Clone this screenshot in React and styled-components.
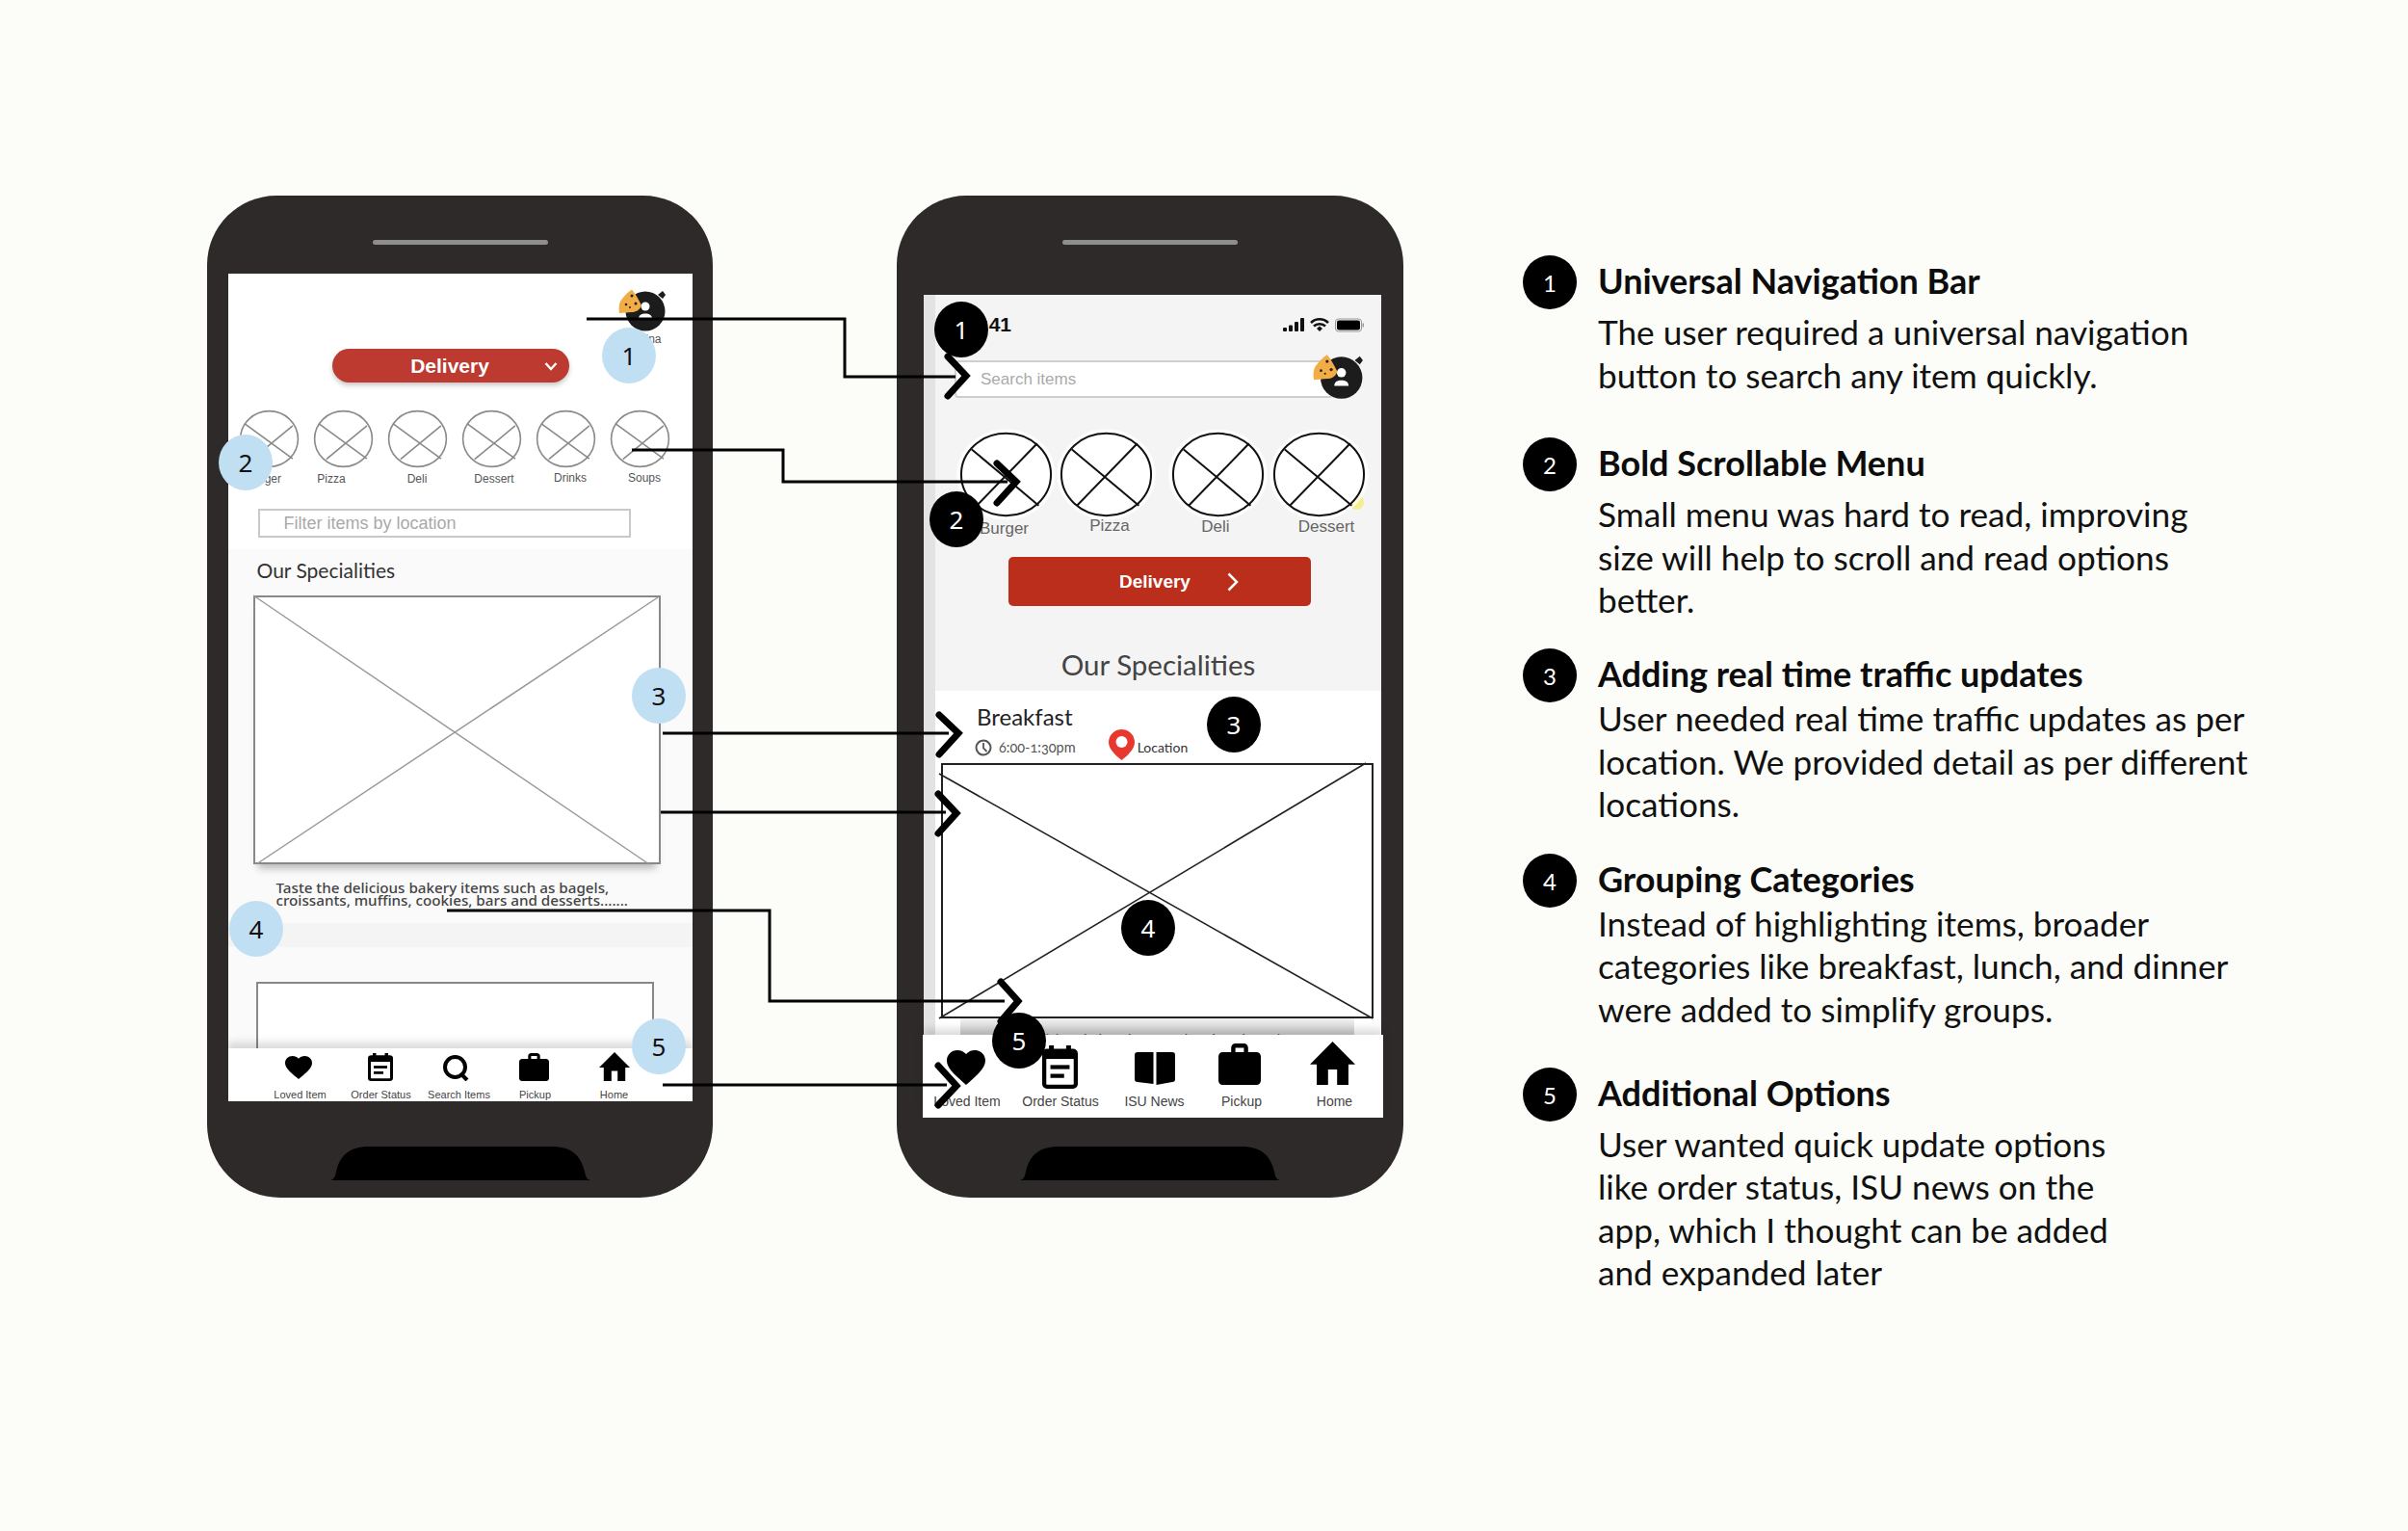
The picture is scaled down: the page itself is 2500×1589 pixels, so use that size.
import React from "react";
import styled, { createGlobalStyle } from "styled-components";

const GlobalStyle = createGlobalStyle`
  html, body {
    margin: 0;
    padding: 0;
    background: #fcfdf8;
    font-family: "Liberation Sans", Arial, sans-serif;
  }
`;

const Page = styled.div`
  position: relative;
  width: 2500px;
  height: 1589px;
  overflow: hidden;
  display: flex;
  align-items: flex-start;
  padding: 203px 0 0 215px;
  box-sizing: border-box;
`;

/* phone shell */
const Phone = styled.div`
  width: ${(p) => p.$w || 525}px;
  height: 1040px;
  margin-left: ${(p) => p.$gap || 0}px;
  flex: none;
  background: #2e2a29;
  border-radius: 72px 72px 76px 76px;
  display: flex;
  flex-direction: column;
  align-items: center;
`;

const Speaker = styled.div`
  width: 182px;
  height: 5px;
  margin-top: 46px;
  border-radius: 3px;
  background: #8e8e8e;
  flex: none;
`;

const Screen = styled.div`
  width: ${(p) => p.$w}px;
  height: ${(p) => p.$h}px;
  margin-top: ${(p) => p.$top}px;
  margin-left: ${(p) => p.$left || 0}px;
  flex: none;
  background: ${(p) => p.$bg};
  display: flex;
  flex-direction: column;
  overflow: ${(p) => (p.$clip ? "hidden" : "visible")};
`;

const NotchArt = styled.svg`
  display: block;
  width: 270px;
  height: 35px;
  margin-top: ${(p) => p.$top}px;
  flex: none;
`;

const Notch = ({ top }) => (
  <NotchArt $top={top} viewBox="0 0 270 35">
    <path d="M0 35C4 34 5 31 6 26C10 9 20 0 40 0H230C250 0 260 9 264 26C265 31 266 34 270 35Z" fill="#000" />
  </NotchArt>
);

/* shared bits inside the screens */
const Placeholder = styled.svg`
  display: block;
  width: ${(p) => p.$w}px;
  height: ${(p) => p.$h}px;
  overflow: visible;
  flex: none;
`;

const CrossCircle = ({ w, h, stroke, width, halo, speck, lines }) => (
  <Placeholder $w={w} $h={h} viewBox="0 0 100 100" preserveAspectRatio="none">
    {speck && <ellipse cx="91" cy="83" rx="8" ry="9" fill="#f5ee8e" />}
    {halo && <ellipse cx="50" cy="50" rx="54" ry="54" fill="#fff" opacity="0.8" />}
    <ellipse cx="50" cy="50" rx="49" ry="49" fill="#fff" stroke={stroke} strokeWidth={width} vectorEffect="non-scaling-stroke" />
    <path d={lines} fill="none" stroke={stroke} strokeWidth={width} vectorEffect="non-scaling-stroke" />
  </Placeholder>
);

const CircleItem = styled.div`
  width: ${(p) => p.$w}px;
  margin-left: ${(p) => p.$left || 0}px;
  display: flex;
  flex-direction: column;
  align-items: center;
  flex: none;
`;

const CircleLabel = styled.span`
  font-size: ${(p) => p.$size}px;
  line-height: ${(p) => p.$line}px;
  margin-top: ${(p) => p.$top}px;
  color: ${(p) => p.$color};
  white-space: nowrap;
  transform: translate(${(p) => p.$dx || 0}px, ${(p) => p.$dy || 0}px);
`;

const ChevronArt = styled.svg`
  display: block;
  flex: none;
  width: ${(p) => p.$w}px;
  height: ${(p) => p.$h}px;
`;

const AvatarArt = styled.svg`
  display: block;
  width: ${(p) => p.$w}px;
  height: ${(p) => p.$h}px;
  flex: none;
`;

const Avatar = ({ w, h }) => (
  <AvatarArt $w={w} $h={h} viewBox="0 0 50 44">
    <circle cx="28" cy="23" r="20.5" fill="#1c1c1c" />
    <path d="M41 6L46 2L49 6L46 10Z" fill="#1c1c1c" />
    <circle cx="28" cy="18" r="4.5" fill="#fff" />
    <path d="M21 31c0-4 3-5.500 7-5.500s7 1.500 7 5.500z" fill="#fff" />
    <path d="M1 25C0 18 1 13 4 10C7 6 10 3 14 0.500C18 5 21 11 24 17C22 22 18 24 14 24Z" fill="#f2ad47" />
    <circle cx="14" cy="7" r="1.500" fill="#222" />
    <circle cx="8" cy="16" r="1.300" fill="#222" />
    <circle cx="18" cy="15" r="1.500" fill="#222" />
    <circle cx="12" cy="19" r="1" fill="#222" />
  </AvatarArt>
);

const NavBar = styled.nav`
  flex: none;
  position: relative;
  z-index: 1;
  display: flex;
  background: #fff;
  height: ${(p) => p.$h}px;
  margin: ${(p) => p.$margin};
  padding-left: ${(p) => p.$pad || 0}px;
  box-shadow: 0 -6px 8px rgba(0, 0, 0, 0.14);
`;

const NavItem = styled.div`
  width: ${(p) => p.$w}px;
  flex: none;
  display: flex;
  flex-direction: column;
  align-items: center;
`;

const NavIconSlot = styled.div`
  height: ${(p) => p.$h}px;
  display: flex;
  align-items: flex-end;
  justify-content: center;
`;

const NavLabel = styled.span`
  font-size: ${(p) => p.$size}px;
  line-height: ${(p) => p.$line}px;
  margin-top: ${(p) => p.$top}px;
  color: #444;
  white-space: nowrap;
  transform: translateX(${(p) => p.$dx || 0}px);
`;

const Glyph = styled.svg`
  display: block;
  width: ${(p) => p.$w}px;
  height: ${(p) => p.$h}px;
  fill: #000;
  transform: translateY(${(p) => p.$drop || 0}px);
`;

const IconHeart = (p) => (
  <Glyph {...p} viewBox="2 3 20 18.35" preserveAspectRatio="none">
    <path d="M12 21.35l-1.45-1.32C5.4 15.36 2 12.28 2 8.5 2 5.42 4.42 3 7.5 3c1.74 0 3.41.81 4.5 2.09C13.09 3.81 14.76 3 16.5 3 19.58 3 22 5.42 22 8.5c0 3.78-3.4 6.86-8.55 11.54L12 21.35z" />
  </Glyph>
);

const IconCalendar = (p) => (
  <Glyph {...p} viewBox="0 0 26 32" preserveAspectRatio="none">
    <rect x="1.500" y="4" width="23" height="26.500" rx="2" fill="#fff" stroke="#000" strokeWidth="3" />
    <rect x="1.500" y="4" width="23" height="6" fill="#000" />
    <rect x="5" y="0" width="3.500" height="6" />
    <rect x="17.500" y="0" width="3.500" height="6" />
    <rect x="6" y="14.500" width="14" height="3" />
    <rect x="6" y="21" width="10" height="3" />
  </Glyph>
);

const IconSearch = (p) => (
  <Glyph {...p} viewBox="0 0 27 27" preserveAspectRatio="none">
    <circle cx="12.500" cy="12.500" r="10.500" fill="none" stroke="#000" strokeWidth="4" />
    <path d="M18 19L25 26" stroke="#000" strokeWidth="4" fill="none" />
  </Glyph>
);

const IconBook = (p) => (
  <Glyph {...p} viewBox="0 0 42 34" preserveAspectRatio="none">
    <path d="M3 0H19.500V33L3 31C1 31 0 30 0 28V3C0 1 1 0 3 0Z" />
    <path d="M39 0H22.500V34L39 31C41 31 42 30 42 28V3C42 1 41 0 39 0Z" />
  </Glyph>
);

const IconCase = (p) => (
  <Glyph {...p} viewBox="2 2 20 19" preserveAspectRatio="none">
    <path d="M20 6h-4V4c0-1.110-.89-2-2-2h-4c-1.110 0-2 .89-2 2v2H4c-1.110 0-1.990.89-1.990 2L2 19c0 1.110.89 2 2 2h16c1.110 0 2-.89 2-2V8c0-1.110-.89-2-2-2zm-6 0h-4V4h4v2z" />
  </Glyph>
);

const IconHome = (p) => (
  <Glyph {...p} viewBox="2 3 20 17" preserveAspectRatio="none">
    <path d="M10 20v-6h4v6h5v-8h3L12 3 2 12h3v8z" />
  </Glyph>
);

/* left phone */
const TopRight = styled.div`
  display: flex;
  flex-direction: column;
  align-items: flex-end;
  padding: 16px 27px 0 0;
`;

const UserName = styled.span`
  font-size: 12px;
  line-height: 15px;
  color: #555;
  margin-right: 5px;
  margin-top: 1px;
`;

const DeliveryPill = styled.div`
  width: 246px;
  height: 35px;
  margin: 2px 0 0 108px;
  box-sizing: border-box;
  padding-right: 12px;
  border-radius: 18px;
  background: #bc3a30;
  box-shadow: 0 3px 5px rgba(0, 0, 0, 0.22);
  color: #fff;
  font-weight: 700;
  font-size: 21px;
  display: grid;
  grid-template-columns: 1fr auto 1fr;
  align-items: center;
  span { grid-column: 2; margin-left: 11px; }
  svg { grid-column: 3; justify-self: end; }
`;

const SmallCircles = styled.div`
  display: flex;
  gap: 16px;
  margin: 29px 0 0 12px;
`;

const FilterBox = styled.div`
  width: 387px;
  height: 30px;
  margin: 24px 0 0 31px;
  box-sizing: border-box;
  border: 2px solid #c9c9c9;
  padding-left: 25px;
  color: #a9a9a9;
  font-size: 18px;
  line-height: 26px;
`;

const SpecialSection = styled.section`
  flex: 1;
  min-height: 0;
  margin-top: 12px;
  background: #fafafa;
  overflow: hidden;
  display: flex;
  flex-direction: column;
`;

const SmallTitle = styled.h3`
  margin: 10px 0 0 30px;
  font: 400 21px/24px "Lato", sans-serif;
  color: #333;
`;

const FoodFrame = styled.div`
  width: 423px;
  height: 279px;
  margin: 14px 0 0 26px;
  flex: none;
  box-shadow: 0 9px 8px -5px rgba(0, 0, 0, 0.28);
  svg { background: #fff; }
`;

const FoodText = styled.p`
  margin: 18px 0 0 50px;
  font: 500 15.2px/13px "Noto Sans", sans-serif;
  color: #444;
  white-space: nowrap;
`;

const Band = styled.div`
  height: 25px;
  margin-top: 17px;
  background: #f4f4f4;
  flex: none;
`;

const NextFrame = styled.div`
  width: 413px;
  height: 120px;
  margin: 36px 0 0 29px;
  box-sizing: border-box;
  border: 2px solid #888;
  background: #fff;
  flex: none;
`;

/* right phone */
const RightBody = styled.div`
  flex: 1;
  min-height: 0;
  border-left: 12px solid #e3e3e3;
  overflow: hidden;
  display: flex;
  flex-direction: column;
`;

const StatusBar = styled.div`
  display: flex;
  justify-content: space-between;
  align-items: center;
  height: 22px;
  padding: 20px 18px 0 37px;
  font-size: 21px;
  font-weight: 700;
  color: #111;
`;

const SearchWrap = styled.div`
  position: relative;
  width: 393px;
  height: 39px;
  margin: 26px 0 0 20px;
  flex: none;
`;

const SearchField = styled.div`
  height: 100%;
  box-sizing: border-box;
  background: #fff;
  border: 2px solid #cfcfcf;
  border-radius: 4px;
  padding-left: 25px;
  font-size: 17px;
  line-height: 35px;
  color: #aaa;
`;

const AvatarSpot = styled.div`
  position: absolute;
  left: 372px;
  top: -7px;
`;

const BigCircles = styled.div`
  display: flex;
  margin: 36px 0 0 25.5px;
`;

const DeliveryButton = styled.div`
  width: 314px;
  height: 51px;
  margin: 21px 0 0 76px;
  flex: none;
  box-sizing: border-box;
  padding-left: 115px;
  border-radius: 5px;
  background: #bb2e1b;
  color: #fff;
  font-weight: 700;
  font-size: 19px;
  display: flex;
  align-items: center;
  gap: 38px;
`;

const BigTitle = styled.h3`
  margin: 43px 0 0;
  text-align: center;
  font: 400 29.5px/36px "Lato", sans-serif;
  color: #444;
  flex: none;
`;

const WhiteSection = styled.section`
  flex: 1;
  margin-top: 9px;
  background: #fff;
  display: flex;
  flex-direction: column;
  min-height: 0;
  overflow: hidden;
`;

const MealName = styled.div`
  margin: 13px 0 0 43px;
  font: 400 24px/28px "Lato", sans-serif;
  color: #222;
`;

const MealMeta = styled.div`
  display: flex;
  align-items: flex-end;
  height: 32px;
  margin: -1px 0 0 41px;
  font: 400 14.5px/26px "Lato", sans-serif;
  font-variant-numeric: oldstyle-nums;
  color: #555;
  flex: none;
  svg { flex: none; }
`;

const MetaText = styled.span`
  margin-left: ${(p) => p.$left}px;
  font-size: ${(p) => p.$size || 14.5}px;
  white-space: nowrap;
  ${(p) => (p.$dark ? "color: #333;" : "")}
`;

const ClockArt = styled.svg`
  width: 18px;
  height: 18px;
  margin-bottom: 4px;
`;

const PinArt = styled.svg`
  width: 27px;
  height: 32px;
  margin-left: 34px;
`;

const BigFrame = styled.div`
  margin: 3px 0 0 6px;
  flex: none;
  svg { background: #fff; }
`;

const ClippedCaption = styled.div`
  width: 409px;
  height: 17px;
  margin-left: 26px;
  box-sizing: border-box;
  padding-left: 10px;
  overflow: hidden;
  white-space: nowrap;
  background: linear-gradient(#f0f0f0, #cfcfcf);
  font: 500 13px/42px "Noto Sans", sans-serif;
  color: #444;
  flex: none;
`;

/* legend */
const Legend = styled.div`
  margin: 62px 0 0 124px;
  width: 800px;
  flex: none;
`;

const LegendItem = styled.div`
  display: grid;
  grid-template-columns: 56px 1fr;
  column-gap: 22px;
  margin-top: ${(p) => p.$top || 0}px;
`;

const LegendDot = styled.div`
  width: 56px;
  height: 56px;
  border-radius: 50%;
  background: #000;
  color: #fff;
  font: 400 24px/58px "Lato", sans-serif;
  text-align: center;
`;

const LegendCopy = styled.div`
  padding-top: 4px;
`;

const LegendHead = styled.h2`
  margin: 0;
  font: 700 36px/44px "Lato", sans-serif;
  color: #0c0c0c;
  white-space: nowrap;
`;

const LegendBody = styled.p`
  margin: ${(p) => (p.$tight ? 2 : 9)}px 0 0;
  font: 400 35.2px/44.6px "Lato", sans-serif;
  color: #111;
  white-space: pre-line;
`;

/* annotations over everything */
const Overlay = styled.svg`
  position: absolute;
  left: 0;
  top: 0;
  z-index: 2;
  width: 2500px;
  height: 1589px;
  pointer-events: none;
`;

const Badge = styled.div`
  position: absolute;
  z-index: 3;
  left: ${(p) => p.$x - 28}px;
  top: ${(p) => p.$y - 29}px;
  width: 56px;
  height: 58px;
  border-radius: 50%;
  background: ${(p) => (p.$dark ? "#000" : "#c1dff3")};
  color: ${(p) => (p.$dark ? "#fff" : "#111")};
  font: 400 26px/58px "Noto Sans", sans-serif;
  text-align: center;
`;

const leftLines = "M8 23L90 85M21 86L90 27";
const rightLines = "M12.500 20L85.700 87M18 87L84 13";

const leftCircles = [
  { name: "Burger", dx: -5 },
  { name: "Pizza", dx: -12 },
  { name: "Deli", dx: 0 },
  { name: "Dessert", dx: 3 },
  { name: "Drinks", dx: 5, dy: -1 },
  { name: "Soups", dx: 5, dy: -1 },
];

const rightCircles = [
  { name: "Burger", dx: -1.5, dy: 2 },
  { name: "Pizza", left: 9.5, dx: 3.5, dy: -1 },
  { name: "Deli", left: 20.5, dx: -2 },
  { name: "Dessert", left: 10, dx: 8, speck: true },
];

const legend = [
  { n: 1, head: "Universal Navigation Bar", body: "The user required a universal navigation\nbutton to search any item quickly." },
  { n: 2, top: 43, head: "Bold Scrollable Menu", body: "Small menu was hard to read, improving\nsize will help to scroll and read options\nbetter." },
  { n: 3, top: 28, tight: true, head: "Adding real time traffic updates", body: "User needed real time traffic updates as per\nlocation. We provided detail as per different\nlocations." },
  { n: 4, top: 29, tight: true, head: "Grouping Categories", body: "Instead of highlighting items, broader\ncategories like breakfast, lunch, and dinner\nwere added to simplify groups." },
  { n: 5, top: 38, head: "Additional Options", body: "User wanted quick update options\nlike order status, ISU news on the\napp, which I thought can be added\nand expanded later" },
];

const connectors = [
  { line: "M609 331H877V391H992", head: "M984 370L1003 390L984 411" },
  { line: "M656 467H813V500H1046", head: "M1035 481L1055 500L1035 522" },
  { line: "M688 761H985", head: "M975 742L995 761L975 783" },
  { line: "M686 843H982", head: "M974 824L993 844L974 865" },
  { line: "M464 945H799V1039H1043", head: "M1039 1019L1057 1039L1039 1060" },
  { line: "M688 1126H983", head: "M974 1106L993 1127L974 1147" },
];

const blueBadges = [
  [1, 653, 369],
  [2, 255, 480],
  [3, 684, 722],
  [4, 266, 964],
  [5, 684, 1086],
];

const blackBadges = [
  [1, 998, 342],
  [2, 993, 539],
  [3, 1281, 752],
  [4, 1192, 963],
  [5, 1058, 1080],
];

const App = () => {
  return (
    <Page>
      <GlobalStyle />

      <Phone>
        <Speaker />
        <Screen $w={482} $h={859} $top={30} $bg="#fff" $clip>
          <TopRight>
            <Avatar w={50} h={44} />
            <UserName>Nina</UserName>
          </TopRight>
          <DeliveryPill>
            <span>Delivery</span>
            <ChevronArt $w={14} $h={10} viewBox="0 0 14 10">
              <path d="M1.500 2L7 8L12.500 2" fill="none" stroke="#fff" strokeWidth="2.500" />
            </ChevronArt>
          </DeliveryPill>
          <SmallCircles>
            {leftCircles.map((c) => (
              <CircleItem key={c.name} $w={61}>
                <CrossCircle w={61} h={59} stroke="#8a8a8a" width={1.6} lines={leftLines} />
                <CircleLabel $size={12} $line={14} $top={5} $color="#555" $dx={c.dx} $dy={c.dy}>
                  {c.name}
                </CircleLabel>
              </CircleItem>
            ))}
          </SmallCircles>
          <FilterBox>Filter items by location</FilterBox>
          <SpecialSection>
            <SmallTitle>Our Specialities</SmallTitle>
            <FoodFrame>
              <Placeholder $w={423} $h={279} viewBox="0 0 423 279">
                <rect x="1" y="1" width="421" height="277" fill="#fff" stroke="#888" strokeWidth="2" />
                <path d="M0 0L411 279M3 279L420 2" fill="none" stroke="#999" strokeWidth="1.500" />
              </Placeholder>
            </FoodFrame>
            <FoodText>
              Taste the delicious bakery items such as bagels,
              <br />
              croissants, muffins, cookies, bars and desserts.......
            </FoodText>
            <Band />
            <NextFrame />
          </SpecialSection>
          <NavBar $h={55} $margin="0" $pad={32}>
            <NavItem $w={82}>
              <NavIconSlot $h={39}><IconHeart $w={28} $h={24} /></NavIconSlot>
              <NavLabel $size={11} $line={14} $top={9} $dx={2}>Loved Item</NavLabel>
            </NavItem>
            <NavItem $w={88}>
              <NavIconSlot $h={42}><IconCalendar $w={26} $h={29} /></NavIconSlot>
              <NavLabel $size={11} $line={14} $top={7} $dx={1}>Order Status</NavLabel>
            </NavItem>
            <NavItem $w={70}>
              <NavIconSlot $h={41.500}><IconSearch $w={27} $h={27} /></NavIconSlot>
              <NavLabel $size={11} $line={14} $top={7} $dx={3}>Search Items</NavLabel>
            </NavItem>
            <NavItem $w={92}>
              <NavIconSlot $h={41.500}><IconCase $w={31} $h={29} /></NavIconSlot>
              <NavLabel $size={11} $line={14} $top={7} $dx={1}>Pickup</NavLabel>
            </NavItem>
            <NavItem $w={74}>
              <NavIconSlot $h={42}><IconHome $w={32} $h={30} /></NavIconSlot>
              <NavLabel $size={11} $line={14} $top={7}>Home</NavLabel>
            </NavItem>
          </NavBar>
        </Screen>
        <Notch top={47} />
      </Phone>

      <Phone $w={526} $gap={191}>
        <Speaker />
        <Screen $w={475} $h={854} $top={52} $left={5} $bg="#f4f4f4">
          <RightBody>
            <StatusBar>
              <span>9:41</span>
              <svg width="84" height="16" viewBox="0 0 84 16">
                <rect x="0" y="11" width="4" height="4" rx="1" fill="#111" />
                <rect x="6" y="8.500" width="4" height="6.500" rx="1" fill="#111" />
                <rect x="12" y="5" width="4" height="10" rx="1" fill="#111" />
                <rect x="18" y="1" width="4" height="14" rx="1" fill="#111" />
                <path d="M29 6C34 1 42 1 47 6M32 9.500C35 6.500 41 6.500 44 9.500" fill="none" stroke="#111" strokeWidth="2.500" />
                <path d="M35 12L38 9.500L41 12L38 15Z" fill="#111" />
                <rect x="54.500" y="2" width="27" height="13" rx="3" fill="none" stroke="#999" strokeWidth="1" />
                <rect x="56" y="3.500" width="24" height="10" rx="2" fill="#000" />
                <rect x="82.500" y="6.500" width="1.500" height="4" fill="#999" />
              </svg>
            </StatusBar>
            <SearchWrap>
              <SearchField>Search items</SearchField>
              <AvatarSpot>
                <Avatar w={53} h={48} />
              </AvatarSpot>
            </SearchWrap>
            <BigCircles>
              {rightCircles.map((c) => (
                <CircleItem key={c.name} $w={95} $left={c.left}>
                  <CrossCircle w={95} h={87} stroke="#111" width={2} halo speck={c.speck} lines={rightLines} />
                  <CircleLabel $size={17} $line={20} $top={1} $color="#666" $dx={c.dx} $dy={c.dy}>
                    {c.name}
                  </CircleLabel>
                </CircleItem>
              ))}
            </BigCircles>
            <DeliveryButton>
              <span>Delivery</span>
              <ChevronArt $w={12} $h={20} viewBox="0 0 12 20">
                <path d="M1.500 1.500L10 10L1.500 18.500" fill="none" stroke="#fff" strokeWidth="2.500" />
              </ChevronArt>
            </DeliveryButton>
            <BigTitle>Our Specialities</BigTitle>
            <WhiteSection>
              <MealName>Breakfast</MealName>
              <MealMeta>
                <ClockArt viewBox="0 0 18 18">
                  <circle cx="9" cy="9" r="7.500" fill="none" stroke="#555" strokeWidth="2" />
                  <path d="M9 4V9.500L12.500 13" fill="none" stroke="#555" strokeWidth="1.800" />
                </ClockArt>
                <MetaText $left={7}>6:00-1:30pm</MetaText>
                <PinArt viewBox="0 0 27 32">
                  <path d="M13.500 0C6 0 0 6 0 13.500C0 20 7 27 13.500 32C20 27 27 20 27 13.500C27 6 21 0 13.500 0Z" fill="#e8372f" />
                  <circle cx="13.500" cy="13" r="6" fill="#fff" />
                </PinArt>
                <MetaText $left={3} $size={14} $dark>Location</MetaText>
              </MealMeta>
              <BigFrame>
                <Placeholder $w={449} $h={265} viewBox="0 0 449 265">
                  <rect x="1" y="1" width="447" height="263" fill="#fff" stroke="#222" strokeWidth="2" />
                  <path d="M-2 11L448 265M-2 265L441 0" fill="none" stroke="#222" strokeWidth="1.600" />
                </Placeholder>
              </BigFrame>
              <ClippedCaption>Taste the delicious bakery items such as bagels, croissants</ClippedCaption>
            </WhiteSection>
          </RightBody>
          <NavBar $h={86} $margin="0 -2px 0 -1px">
            <NavItem $w={90}>
              <NavIconSlot $h={52}><IconHeart $w={40} $h={36} /></NavIconSlot>
              <NavLabel $size={14} $line={16} $top={9} $dx={1}>Loved Item</NavLabel>
            </NavItem>
            <NavItem $w={104}>
              <NavIconSlot $h={52}><IconCalendar $w={37} $h={45} $drop={4} /></NavIconSlot>
              <NavLabel $size={14} $line={16} $top={9} $dx={1}>Order Status</NavLabel>
            </NavItem>
            <NavItem $w={93}>
              <NavIconSlot $h={52}><IconBook $w={42} $h={34} /></NavIconSlot>
              <NavLabel $size={14} $line={16} $top={9}>ISU News</NavLabel>
            </NavItem>
            <NavItem $w={84}>
              <NavIconSlot $h={52}><IconCase $w={44} $h={43} /></NavIconSlot>
              <NavLabel $size={14} $line={16} $top={9} $dx={2}>Pickup</NavLabel>
            </NavItem>
            <NavItem $w={109}>
              <NavIconSlot $h={52}><IconHome $w={47} $h={45} /></NavIconSlot>
              <NavLabel $size={14} $line={16} $top={9} $dx={2}>Home</NavLabel>
            </NavItem>
          </NavBar>
        </Screen>
        <Notch top={30} />
      </Phone>

      <Legend>
        {legend.map((item) => (
          <LegendItem key={item.n} $top={item.top}>
            <LegendDot>{item.n}</LegendDot>
            <LegendCopy>
              <LegendHead>{item.head}</LegendHead>
              <LegendBody $tight={item.tight}>{item.body}</LegendBody>
            </LegendCopy>
          </LegendItem>
        ))}
      </Legend>

      <Overlay viewBox="0 0 2500 1589">
        {connectors.map((c) => (
          <g key={c.line} fill="none" stroke="#000">
            <path d={c.line} strokeWidth="3" />
            <path d={c.head} strokeWidth="7" strokeLinecap="round" strokeLinejoin="miter" />
          </g>
        ))}
      </Overlay>

      {blueBadges.map(([n, x, y]) => (
        <Badge key={`b${n}`} $x={x} $y={y}>{n}</Badge>
      ))}
      {blackBadges.map(([n, x, y]) => (
        <Badge key={`k${n}`} $x={x} $y={y} $dark>{n}</Badge>
      ))}
    </Page>
  );
};

export default App;
